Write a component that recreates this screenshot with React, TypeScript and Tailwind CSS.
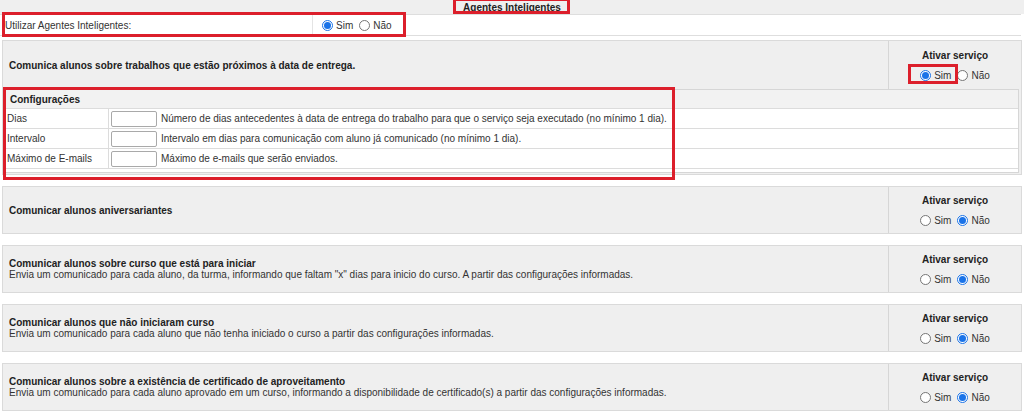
import React from "react";

type Service = {
  title: string;
  desc?: string;
  on: boolean;
};

const services: Service[] = [
  { title: "Comunicar alunos aniversariantes", on: false },
  {
    title: "Comunicar alunos sobre curso que está para iniciar",
    desc: 'Envia um comunicado para cada aluno, da turma, informando que faltam "x" dias para inicio do curso. A partir das configurações informadas.',
    on: false,
  },
  {
    title: "Comunicar alunos que não iniciaram curso",
    desc: "Envia um comunicado para cada aluno que não tenha iniciado o curso a partir das configurações informadas.",
    on: false,
  },
  {
    title: "Comunicar alunos sobre a existência de certificado de aproveitamento",
    desc: "Envia um comunicado para cada aluno aprovado em um curso, informando a disponibilidade de certificado(s) a partir das configurações informadas.",
    on: false,
  },
];

const configRows = [
  { label: "Dias", help: "Número de dias antecedentes à data de entrega do trabalho para que o serviço seja executado (no mínimo 1 dia)." },
  { label: "Intervalo", help: "Intervalo em dias para comunicação com aluno já comunicado (no mínimo 1 dia)." },
  { label: "Máximo de E-mails", help: "Máximo de e-mails que serão enviados." },
];

function Radio({ checked }: { checked: boolean }) {
  return checked ? (
    <span className="w-[11px] h-[11px] rounded-full border border-[#1a73e8] bg-white flex items-center justify-center shrink-0">
      <span className="w-[7px] h-[7px] rounded-full bg-[#1a73e8]" />
    </span>
  ) : (
    <span className="block w-[11px] h-[11px] rounded-full border border-[#767676] bg-white shrink-0" />
  );
}

function SimNao({ sim }: { sim: boolean }) {
  return (
    <div className="flex items-center text-[#333]">
      <Radio checked={sim} />
      <span className="ml-[3px]">Sim</span>
      <span className="ml-[6px]">
        <Radio checked={!sim} />
      </span>
      <span className="ml-[3px]">Não</span>
    </div>
  );
}

function ToggleCell({ sim }: { sim: boolean }) {
  return (
    <div className="w-[133px] border-l border-[#d6d6d6] flex flex-col items-center justify-center gap-[5px]">
      <div className="font-bold text-[#222]">Ativar serviço</div>
      <SimNao sim={sim} />
    </div>
  );
}

function ServicePanel({ s }: { s: Service }) {
  return (
    <div className="mx-[2px] mt-[11px] h-[48px] bg-[#efefef] border border-[#dadada] flex">
      <div className="flex-1 pl-[6px] flex flex-col justify-center leading-[11px]">
        <div className="font-bold text-[#222]">{s.title}</div>
        {s.desc && <div className="text-[#333]">{s.desc}</div>}
      </div>
      <ToggleCell sim={s.on} />
    </div>
  );
}

export default function App() {
  return (
    <div className="relative w-[1024px] h-[417px] overflow-hidden bg-white font-['Tahoma','Liberation_Sans',sans-serif] text-[10px]">
      {/* cabeçalho */}
      <div className="h-[14px] bg-[#efefef] flex items-center justify-center font-bold text-[#222]">
        Agentes Inteligentes
      </div>
      <div className="h-[22px] border-y border-[#dedede] flex items-center mr-[3px]">
        <div className="w-[313px] h-full pl-[5px] flex items-center border-r border-[#e4e4e4] text-[#333]">
          Utilizar Agentes Inteligentes:
        </div>
        <div className="pl-[9px]">
          <SimNao sim={true} />
        </div>
      </div>

      {/* serviço com configurações */}
      <div className="mx-[2px] mt-[4px] h-[135px] bg-[#efefef] border border-[#dadada] flex flex-col">
        <div className="h-[48px] flex">
          <div className="flex-1 pl-[6px] flex items-center font-bold text-[#222]">
            Comunica alunos sobre trabalhos que estão próximos à data de entrega.
          </div>
          <ToggleCell sim={true} />
        </div>
        <div className="mx-[2px] bg-white border border-[#d6d6d6] text-[#333]">
          <div className="h-[19px] bg-[#f2f2f2] pl-[4px] flex items-center font-bold text-[#222] border-b border-[#dcdcdc]">
            Configurações
          </div>
          {configRows.map((r) => (
            <div key={r.label} className="h-[20px] flex items-center border-b border-[#dcdcdc]">
              <div className="w-[103px] h-full pl-[1px] flex items-center border-r border-[#dcdcdc]">{r.label}</div>
              <div className="ml-[2px] w-[46px] h-[16px] border border-[#a9a9a9] rounded-[2px] bg-white" />
              <div className="ml-[4px]">{r.help}</div>
            </div>
          ))}
          <div className="h-[3px]" />
        </div>
      </div>

      {services.map((s) => (
        <ServicePanel key={s.title} s={s} />
      ))}

      {/* marcações em vermelho */}
      <div className="absolute left-[453px] top-[-2px] w-[117px] h-[16px] border-[3px] border-[#dc1f2b] pointer-events-none" />
      <div className="absolute left-[2px] top-[12px] w-[404px] h-[25px] border-[3px] border-[#dc1f2b] pointer-events-none" />
      <div className="absolute left-[908px] top-[64px] w-[50px] h-[20px] border-[3px] border-[#dc1f2b] pointer-events-none" />
      <div className="absolute left-[3px] top-[87px] w-[672px] h-[93px] border-[3px] border-[#dc1f2b] pointer-events-none" />
    </div>
  );
}
